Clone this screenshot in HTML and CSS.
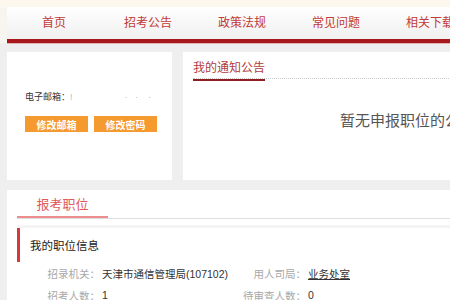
FILE: index.html
```html
<!DOCTYPE html>
<html lang="zh">
<head>
    <meta charset="UTF-8">
    <title>报考职位</title>
    <link rel="stylesheet" href="styles.css">
</head>
<body>
    <div class="top-strip"></div>
    <div class="header">
        <div class="nav">
            <a class="nav-item">首页</a>
            <a class="nav-item">招考公告</a>
            <a class="nav-item">政策法规</a>
            <a class="nav-item">常见问题</a>
            <a class="nav-item">相关下载</a>
        </div>
    </div>

    <div class="main">
        <div class="row">
            <div class="card user-card">
                <div class="email">电子邮箱：<span class="masked">!</span><span class="masked dots">·&nbsp;&nbsp;&nbsp;·&nbsp;&nbsp;&nbsp;&nbsp;·</span></div>
                <div class="btns">
                    <button class="btn">修改邮箱</button>
                    <button class="btn">修改密码</button>
                </div>
            </div>
            <div class="card notice-card">
                <div class="notice-head">
                    <span class="notice-title">我的通知公告</span>
                </div>
                <div class="notice-empty">暂无申报职位的公示</div>
            </div>
        </div>

        <div class="card job-card">
            <div class="tabs">
                <span class="tab active">报考职位</span>
            </div>
            <div class="panel">
                <div class="panel-title">我的职位信息</div>
                <div class="info-grid">
                    <span class="label">招录机关：</span>
                    <span class="value">天津市通信管理局(107102)</span>
                    <span class="label">用人司局：</span>
                    <span class="value link">业务处室</span>
                    <span class="label">招考人数：</span>
                    <span class="value">1</span>
                    <span class="label">待审查人数：</span>
                    <span class="value">0</span>
                </div>
            </div>
        </div>
    </div>
</body>
</html>
```

FILE: styles.css
```css
body {
    margin: 0;
    font-family: "Liberation Sans", "Noto Sans CJK SC", sans-serif;
    background-color: #efefef;
    color: #333;
    overflow: hidden;
}

.top-strip {
    height: 7px;
    background-color: #fcf8ee;
}

.header {
    padding-left: 7px;
    background-color: #f7f5f0;
}

.nav {
    display: flex;
    height: 32px;
    background: linear-gradient(#ffffff, #f0f0f0);
    border-bottom: 4px solid #a8191d;
    box-shadow: 0 1px 0 #e2b4b4;
}

.nav-item {
    flex: 0 0 94px;
    text-align: center;
    line-height: 32px;
    font-size: 12px;
    color: #c23a36;
    white-space: nowrap;
}

.main {
    padding: 9px 0 0 7px;
}

.row {
    display: flex;
    gap: 11px;
    height: 128px;
}

.card {
    background-color: #fff;
}

.user-card {
    flex: 0 0 165px;
    padding: 40px 0 0 18px;
    box-sizing: border-box;
}

.email {
    font-size: 9px;
    line-height: 11px;
    color: #333;
    white-space: nowrap;
}

.masked {
    color: #bbb;
}

.dots {
    margin-left: 52px;
}

.btns {
    display: flex;
    gap: 6px;
    margin-top: 13px;
}

.btn {
    width: 63px;
    height: 16px;
    padding: 0;
    border: none;
    background-color: #f59a2f;
    color: #fff;
    font-family: inherit;
    font-size: 10px;
    font-weight: bold;
}

.notice-card {
    flex: 1;
    padding: 6px 0 0 10px;
}

.notice-head {
    height: 20px;
    border-bottom: 1px dotted #c8c8c8;
}

.notice-title {
    display: inline-block;
    height: 19px;
    font-size: 12px;
    line-height: 17px;
    color: #b23b3b;
    border-bottom: 2px solid #8e1e22;
}

.notice-empty {
    margin-top: 30px;
    padding-left: 147px;
    font-size: 15px;
    color: #555;
    white-space: nowrap;
}

.job-card {
    margin-top: 10px;
    height: 120px;
    padding-left: 10px;
}

.tabs {
    border-bottom: 1px solid #dedede;
    height: 28px;
}

.tab {
    display: inline-block;
    width: 91px;
    height: 26px;
    text-align: center;
    font-size: 13px;
    line-height: 30px;
    color: #e05a5a;
}

.tab.active {
    border-bottom: 2px solid #ec8c8c;
}

.panel {
    margin-top: 6px;
    border-top: 3px solid #f4f4f4;
}

.panel-title {
    height: 34px;
    border-left: 3px solid #d9383a;
    padding-left: 10px;
    font-size: 11.5px;
    line-height: 36px;
    color: #222;
}

.info-grid {
    display: grid;
    grid-template-columns: 70px 140px 66px auto;
    grid-auto-rows: 22px;
    align-items: center;
    padding-left: 13px;
    font-size: 10.5px;
}

.label {
    text-align: right;
    color: #a8a8a8;
    white-space: nowrap;
}

.value {
    padding-left: 2px;
    color: #333;
    white-space: nowrap;
}

.value.link {
    text-decoration: underline;
}
```
